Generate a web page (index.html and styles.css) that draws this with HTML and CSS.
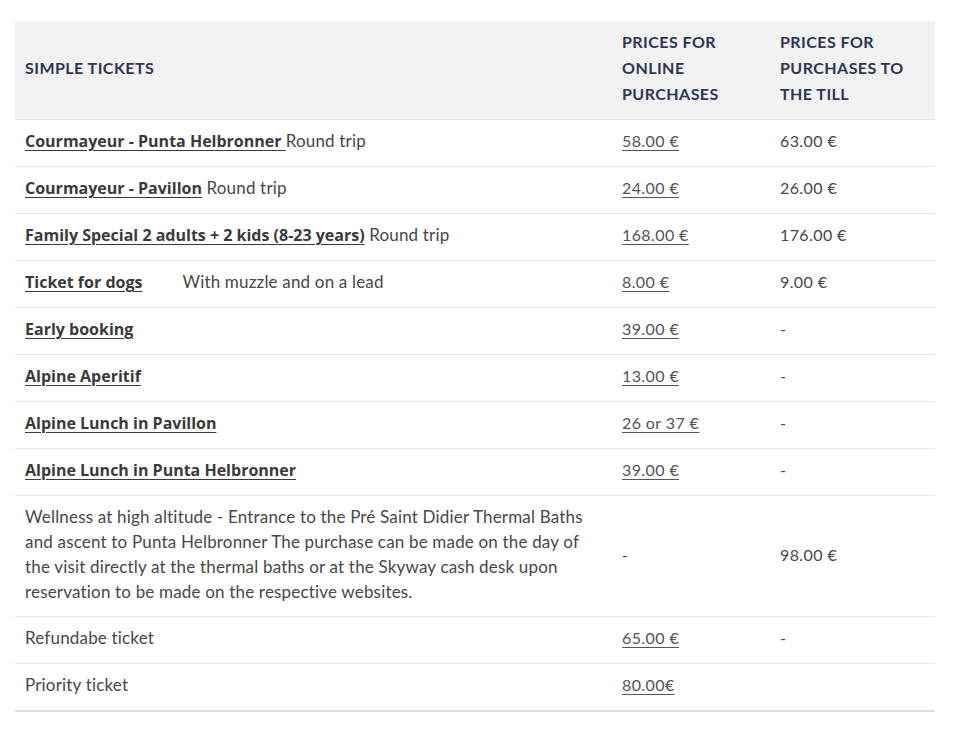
FILE: index.html
```html
<!DOCTYPE html>
<html>
<head>
	<meta charset="utf-8">
	<meta name="viewport" content="width=device-width, initial-scale=1">
	<title>Skyway tickets</title>
	<link rel="stylesheet" href="styles.css">
</head>
<body>

	<table class="prices">
		<thead>
			<tr>
				<th class="name">SIMPLE TICKETS</th>
				<th class="online">PRICES FOR ONLINE PURCHASES</th>
				<th class="till">PRICES FOR PURCHASES TO THE TILL</th>
			</tr>
		</thead>
		<tbody>
			<tr>
				<td><a href="#">Courmayeur - Punta Helbronner </a>Round trip</td>
				<td class="num"><a class="price" href="#">58.00 €</a></td>
				<td class="num">63.00 €</td>
			</tr>
			<tr>
				<td><a href="#">Courmayeur - Pavillon</a> Round trip</td>
				<td class="num"><a class="price" href="#">24.00 €</a></td>
				<td class="num">26.00 €</td>
			</tr>
			<tr>
				<td><a href="#">Family Special 2 adults + 2 kids (8-23 years)</a> Round trip</td>
				<td class="num"><a class="price" href="#">168.00 €</a></td>
				<td class="num">176.00 €</td>
			</tr>
			<tr>
				<td><a href="#">Ticket for dogs</a><span class="note">With muzzle and on a lead</span></td>
				<td class="num"><a class="price" href="#">8.00 €</a></td>
				<td class="num">9.00 €</td>
			</tr>
			<tr>
				<td><a href="#">Early booking</a></td>
				<td class="num"><a class="price" href="#">39.00 €</a></td>
				<td class="num">-</td>
			</tr>
			<tr>
				<td><a href="#">Alpine Aperitif</a></td>
				<td class="num"><a class="price" href="#">13.00 €</a></td>
				<td class="num">-</td>
			</tr>
			<tr>
				<td><a href="#">Alpine Lunch in Pavillon</a></td>
				<td class="num"><a class="price" href="#">26 or 37 €</a></td>
				<td class="num">-</td>
			</tr>
			<tr>
				<td><a href="#">Alpine Lunch in Punta Helbronner</a></td>
				<td class="num"><a class="price" href="#">39.00 €</a></td>
				<td class="num">-</td>
			</tr>
			<tr class="long">
				<td>Wellness at high altitude - Entrance to the Pré Saint Didier Thermal Baths and ascent to Punta Helbronner The purchase can be made on the day of the visit directly at the thermal baths or at the Skyway cash desk upon reservation to be made on the respective websites.</td>
				<td class="num">-</td>
				<td class="num">98.00 €</td>
			</tr>
			<tr>
				<td>Refundabe ticket</td>
				<td class="num"><a class="price" href="#">65.00 €</a></td>
				<td class="num">-</td>
			</tr>
			<tr>
				<td>Priority ticket</td>
				<td class="num"><a class="price" href="#">80.00€</a></td>
				<td class="num"></td>
			</tr>
		</tbody>
	</table>

</body>
</html>
```

FILE: styles.css
```css
body{margin: 0; background: #fff; font-family: "Lato", "Open Sans", sans-serif;}

.prices{
	width: 920px;
	margin: 21px 0 0 15px;
	border-collapse: collapse;
	font-size: 17px;
	color: #474747;
	border-bottom: 2px solid #dedede;
}

.prices th{
	background: #f2f2f2;
	color: #2d3653;
	font-size: 16px;
	font-weight: 700;
	text-align: left;
	line-height: 26px;
	letter-spacing: 0.45px;
	padding: 8px 10px 12px;
	vertical-align: middle;
}
.prices th.name{width: 577px;}
.prices th.online{width: 138px;}

.prices td{
	padding: 8px 10px 13px;
	line-height: 25px;
	letter-spacing: 0.18px;
	border-top: 1px solid #e6e6e6;
	vertical-align: middle;
	font-weight: 400;
}
.prices td.num{
	font-size: 16px;
	letter-spacing: 0.4px;
}
.prices tr.long td{padding-bottom: 12px;}

.prices td a{
	font-family: "Open Sans", sans-serif;
	font-size: 16px;
	line-height: 1;
	letter-spacing: 0;
	color: #3a3a3a;
	font-weight: 700;
	text-decoration: underline;
	text-underline-offset: 3px;
}
.prices td a.price{
	font-family: "Lato", sans-serif;
	letter-spacing: 0.4px;
	color: #555;
	font-weight: 400;
}
.note{margin-left: 40px;}
```
